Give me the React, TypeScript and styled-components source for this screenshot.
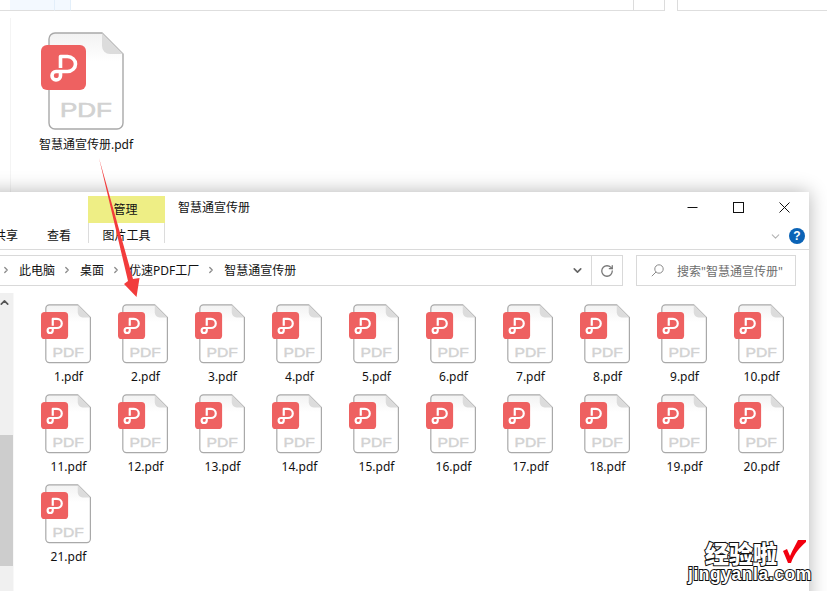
import React from "react";
import styled, { createGlobalStyle } from "styled-components";
import { ChevronDown, ChevronRight, ChevronUp, RotateCw } from "lucide-react";

const Global = createGlobalStyle`
  html, body { margin: 0; padding: 0; background: #fff; }
  body { font-family: "Noto Sans", "Noto Sans CJK SC", sans-serif; font-size: 12px; color: #111; }
`;

const Page = styled.div`
  position: relative;
  width: 827px;
  height: 591px;
  overflow: hidden;
  background: #fff;
`;

const TopStrip = styled.div`
  display: flex;
  height: 11px;
`;
const StripCell = styled.div<{ $w: number; $fill?: boolean; $edge?: boolean; $open?: boolean }>`
  box-sizing: border-box;
  flex: ${(p) => (p.$w ? "none" : "1")};
  width: ${(p) => p.$w}px;
  background: ${(p) => (p.$fill ? "#f3f9ff" : "transparent")};
  border-left: ${(p) => (p.$edge ? "1px solid #dcdcdc" : "none")};
  border-right: ${(p) => (p.$fill ? "1px solid #e3effa" : "none")};
  border-bottom: ${(p) => (p.$open ? "none" : "1px solid #dedede")};
`;

const DesktopPane = styled.div`
  margin: 7px 0 0 10px;
  padding: 14px 0 0 28px;
  height: 165px;
  border-left: 1px solid #f4f4f4;
`;
const BigFile = styled.div`
  display: inline-flex;
  flex-direction: column;
  align-items: center;
`;
const BigLabel = styled.div`
  margin-top: 6px;
  line-height: 16px;
  white-space: nowrap;
`;

const IconSvg = styled.svg<{ $w: number; $h: number; $shift: number }>`
  display: block;
  width: ${(p) => p.$w}px;
  height: ${(p) => p.$h}px;
  margin-right: ${(p) => p.$shift}px;
  flex: none;
`;

function PdfIcon({ big, id }: { big?: boolean; id: string }) {
  return (
    <IconSvg viewBox="0 0 83 99" $w={big ? 83 : 50} $h={big ? 99 : 60} $shift={big ? 8 : 6}>
      <defs>
        <linearGradient id={id} x1="0" y1="0" x2="0" y2="1">
          <stop offset="0" stopColor="#f2f2f2" />
          <stop offset="0.3" stopColor="#ffffff" />
        </linearGradient>
      </defs>
      <path
        d="M14 1 H61 L82 22 V91 a6 6 0 0 1 -6 6 H14 a6 6 0 0 1 -6 -6 V7 a6 6 0 0 1 6 -6 Z"
        fill={`url(#${id})`}
        stroke="#a9a9a9"
        strokeWidth={big ? 1.4 : 2}
      />
      <path d="M61 1 L82 22 H69 a8 8 0 0 1 -8 -8 Z" fill="#dcdcdc" />
      <text
        x="19"
        y={big ? 85 : 88}
        fontFamily="'Liberation Sans', sans-serif"
        fontSize="20"
        textLength="52"
        lengthAdjust="spacingAndGlyphs"
        fill="#d2d2d2"
        stroke="#d2d2d2"
        strokeWidth="0.6"
      >
        PDF
      </text>
      <rect x="0" y="13" width="45" height="45" rx="6" fill="#ee6161" />
      <path
        d="M19.5 36 V24.5 H26.5 a8 7.5 0 0 1 0 15 H15 a4 4.2 0 0 0 0 8.4 a4.5 4.2 0 0 0 4.5 -4.2 V40"
        fill="none"
        stroke="#fff"
        strokeWidth="3.6"
        strokeLinejoin="round"
      />
    </IconSvg>
  );
}

const Window = styled.div`
  position: absolute;
  left: -20px;
  top: 192px;
  width: 829px;
  height: 420px;
  background: #fff;
  box-shadow: 0 0 18px rgba(0, 0, 0, 0.3);
  display: flex;
  flex-direction: column;
`;

const TitleRow = styled.div`
  display: flex;
  align-items: flex-start;
  height: 31px;
  flex: none;
  padding-left: 108px;
`;
const ManageTab = styled.div`
  width: 77px;
  height: 27px;
  margin-top: 4px;
  background: #eeee85;
  display: flex;
  align-items: center;
  justify-content: center;
  padding: 0 2px 2px 0;
  box-sizing: border-box;
`;
const WindowTitle = styled.div`
  margin: 8px 0 0 13px;
  line-height: 16px;
  flex: 1;
`;
const Controls = styled.div`
  display: flex;
  margin-top: 10px;
  padding-right: 19px;
  gap: 35px;
  align-items: center;
`;
const ControlSvg = styled.svg`
  display: block;
  width: 11px;
  height: 11px;
`;

const Ribbon = styled.div`
  display: flex;
  height: 26px;
  flex: none;
  border-bottom: 1px solid #dadada;
  box-sizing: content-box;
  align-items: flex-start;
  padding-left: 14px;
`;
const RibbonTab = styled.div<{ $w: number; $boxed?: boolean; $gap?: number }>`
  width: ${(p) => p.$w}px;
  height: 20px;
  margin-left: ${(p) => p.$gap ?? 0}px;
  line-height: 26px;
  text-align: center;
  box-sizing: border-box;
  ${(p) => (p.$boxed ? "border-left: 1px solid #dcdcdc; border-right: 1px solid #dcdcdc;" : "")}
`;
const RibbonEnd = styled.div`
  margin-left: auto;
  display: flex;
  align-items: center;
  gap: 7px;
  padding: 5px 4px 0 0;
  color: #b4b4b4;
`;
const HelpBadge = styled.div`
  width: 16px;
  height: 16px;
  border-radius: 50%;
  background: #0b63b6;
  color: #fff;
  font: bold 12px/16px "Liberation Sans", sans-serif;
  text-align: center;
`;

const AddressRow = styled.div`
  display: flex;
  flex: none;
  margin-top: 5px;
  height: 31px;
  padding-right: 13px;
`;
const Crumbs = styled.div`
  flex: none;
  width: 612px;
  box-sizing: border-box;
  display: flex;
  align-items: center;
  border: 1px solid #d9d9d9;
  border-left: none;
  padding: 0 0 2px 14px;
  color: #111;
`;
const Sep = styled(ChevronRight)`
  color: #8a8a8a;
  flex: none;
  margin: 0 8px 0 7px;
`;
const Crumb = styled.span`
  white-space: nowrap;
`;
const CrumbMenu = styled.div`
  margin-left: auto;
  margin-right: 7px;
  display: flex;
  color: #666;
  padding-top: 2px;
`;
const Refresh = styled.div`
  flex: none;
  width: 31px;
  box-sizing: border-box;
  border: 1px solid #d9d9d9;
  border-left: none;
  display: flex;
  align-items: center;
  justify-content: center;
  color: #777;
`;
const SearchBox = styled.div`
  flex: none;
  margin-left: 13px;
  width: 160px;
  box-sizing: border-box;
  border: 1px solid #d9d9d9;
  display: flex;
  align-items: center;
  padding-left: 14px;
  gap: 13px;
  color: #6d6d6d;
  white-space: nowrap;
`;
const SearchSvg = styled.svg`
  display: block;
  width: 13px;
  height: 13px;
  flex: none;
`;

const Body = styled.div`
  display: flex;
  flex: 1;
  margin-top: 7px;
  min-height: 0;
`;
const Scrollbar = styled.div`
  flex: none;
  width: 33px;
  background: #f0f0f0;
  display: flex;
  flex-direction: column;
  align-items: flex-end;
  border-right: 1px solid #f8f8f8;
`;
const ScrollUp = styled(ChevronUp)`
  margin: 3px 2px 0 0;
  color: #555;
  flex: none;
`;
const Thumb = styled.div`
  width: 100%;
  height: 131px;
  margin-top: 126px;
  background: #cdcdcd;
`;

const FileGrid = styled.div`
  display: grid;
  grid-template-columns: repeat(10, 77px);
  grid-auto-rows: 90px;
  padding: 11px 0 0 16px;
`;
const FileCell = styled.div`
  display: flex;
  flex-direction: column;
  align-items: center;
`;
const FileLabel = styled.div`
  margin-top: 5px;
  line-height: 16px;
`;

const ArrowSvg = styled.svg`
  position: absolute;
  left: 0;
  top: 0;
  width: 827px;
  height: 591px;
  pointer-events: none;
`;

const Watermark = styled.div`
  position: absolute;
  left: 688px;
  top: 540px;
  width: 126px;
  color: #fff;
  pointer-events: none;
`;
const MarkTop = styled.div`
  display: flex;
  align-items: flex-start;
  height: 26px;
  padding-left: 17px;
`;
const MarkCn = styled.div`
  font: 900 24px/26px "Noto Sans CJK SC", sans-serif;
  -webkit-text-stroke: 2px #111;
  paint-order: stroke fill;
`;
const MarkCheck = styled.svg`
  display: block;
  width: 24px;
  height: 24px;
  margin-left: 6px;
`;
const MarkEn = styled.div`
  font: bold 17.5px/16px "Liberation Sans", sans-serif;
  -webkit-text-stroke: 2px #111;
  paint-order: stroke fill;
  white-space: nowrap;
  letter-spacing: 0.55px;
`;

const files = Array.from({ length: 21 }, (_, i) => `${i + 1}.pdf`);

export default function App() {
  return (
    <Page>
      <Global />
      <TopStrip>
        <StripCell $w={10} />
        <StripCell $w={45} $fill />
        <StripCell $w={16} $fill />
        <StripCell $w={562} />
        <StripCell $w={31} $edge />
        <StripCell $w={13} $edge $open />
        <StripCell $w={0} $edge />
      </TopStrip>
      <DesktopPane>
        <BigFile>
          <PdfIcon big id="big" />
          <BigLabel>智慧通宣传册.pdf</BigLabel>
        </BigFile>
      </DesktopPane>

      <Window>
        <TitleRow>
          <ManageTab>管理</ManageTab>
          <WindowTitle>智慧通宣传册</WindowTitle>
          <Controls>
            <ControlSvg viewBox="0 0 11 11">
              <path d="M0.5 5.5 H10.5" stroke="#111" fill="none" />
            </ControlSvg>
            <ControlSvg viewBox="0 0 11 11">
              <rect x="0.5" y="0.5" width="10" height="10" stroke="#111" fill="none" />
            </ControlSvg>
            <ControlSvg viewBox="0 0 11 11">
              <path d="M0.5 0.5 L10.5 10.5 M10.5 0.5 L0.5 10.5" stroke="#111" fill="none" />
            </ControlSvg>
          </Controls>
        </TitleRow>
        <Ribbon>
          <RibbonTab $w={24}>共享</RibbonTab>
          <RibbonTab $w={52} $gap={15}>查看</RibbonTab>
          <RibbonTab $w={77} $boxed $gap={3}>图片工具</RibbonTab>
          <RibbonEnd>
            <ChevronDown size={13} />
            <HelpBadge>?</HelpBadge>
          </RibbonEnd>
        </Ribbon>
        <AddressRow>
          <Crumbs>
            <Sep size={10} strokeWidth={3} />
            <Crumb>此电脑</Crumb>
            <Sep size={10} strokeWidth={3} />
            <Crumb>桌面</Crumb>
            <Sep size={10} strokeWidth={3} />
            <Crumb>优速PDF工厂</Crumb>
            <Sep size={10} strokeWidth={3} />
            <Crumb>智慧通宣传册</Crumb>
            <CrumbMenu>
              <ChevronDown size={13} strokeWidth={3} />
            </CrumbMenu>
          </Crumbs>
          <Refresh>
            <RotateCw size={14} strokeWidth={2.2} />
          </Refresh>
          <SearchBox>
            <SearchSvg viewBox="0 0 13 13">
              <circle cx="8" cy="5" r="4.2" fill="none" stroke="#8a8a8a" />
              <path d="M5 8 L0.8 12.2" stroke="#8a8a8a" fill="none" />
            </SearchSvg>
            搜索"智慧通宣传册"
          </SearchBox>
        </AddressRow>
        <Body>
          <Scrollbar>
            <ScrollUp size={13} strokeWidth={3} />
            <Thumb />
          </Scrollbar>
          <FileGrid>
            {files.map((f) => (
              <FileCell key={f}>
                <PdfIcon id={f} />
                <FileLabel>{f}</FileLabel>
              </FileCell>
            ))}
          </FileGrid>
        </Body>
      </Window>

      <ArrowSvg viewBox="0 0 827 591">
        <polygon points="99,158 133,279 139.5,278 136.5,297 124,284 128,281" fill="#f23c3c" />
      </ArrowSvg>

      <Watermark>
        <MarkTop>
          <MarkCn>经验啦</MarkCn>
          <MarkCheck viewBox="0 0 24 24">
            <path d="M0 11 L4 9 L7 16 C10 9 13 4 15 0 H23 V2 C17 7 11 14 8 23 H5 Z" fill="#f2000f" />
          </MarkCheck>
        </MarkTop>
        <MarkEn>jingyanla.com</MarkEn>
      </Watermark>
    </Page>
  );
}
